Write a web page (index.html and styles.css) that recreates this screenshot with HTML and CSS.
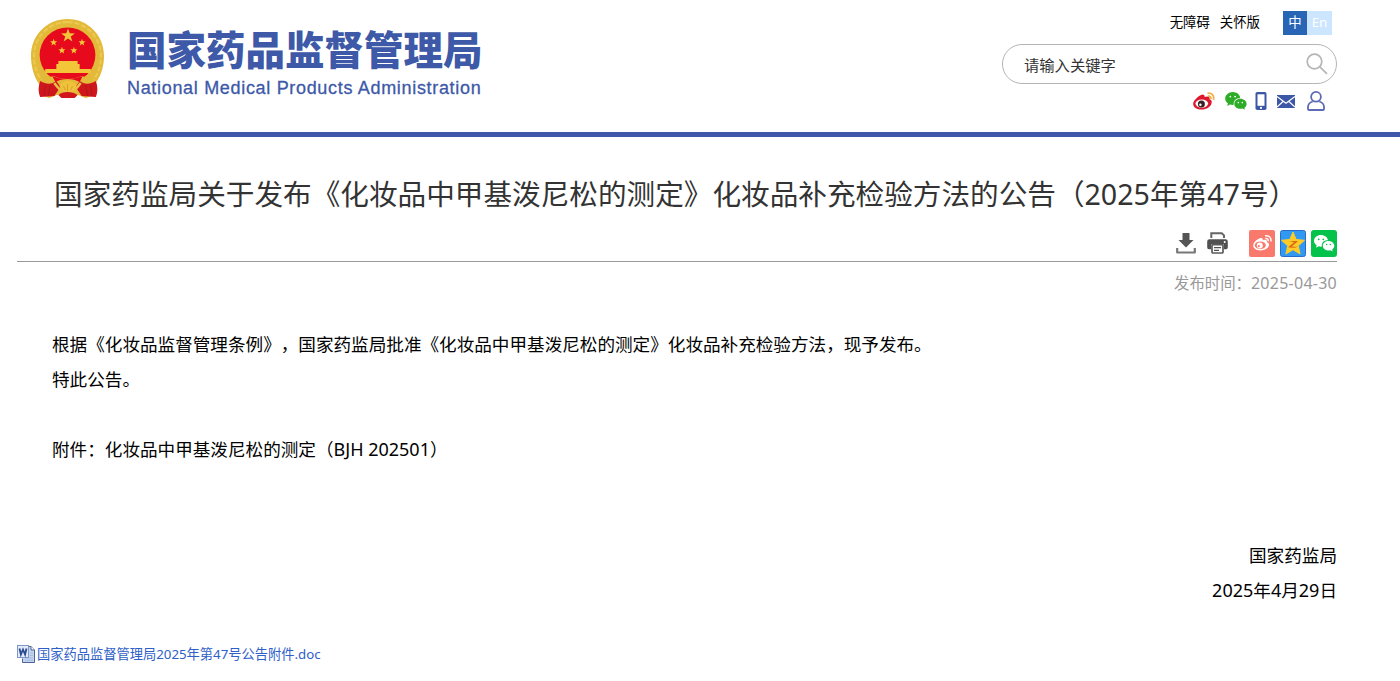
FILE: index.html
```html
<!DOCTYPE html>
<html lang="zh-CN">
<head>
    <meta charset="UTF-8">
    <meta name="viewport" content="width=device-width, initial-scale=1.0">
    <title>国家药品监督管理局</title>
    <link rel="stylesheet" href="styles.css">
</head>
<body>

    <!-- 页头 -->
    <header class="header">
        <a class="logo" href="#">
            <svg class="emblem" viewBox="0 0 74 80" width="75" height="80" preserveAspectRatio="none">
                <path d="M37 0C57 0 73 16 73 37c0 12-4 22-9 28L58 76H16L9 65C4 58 1 48 1 37 1 16 17 0 37 0z" fill="#e3b93a"/>
                <path d="M37 3C19 3 4 18 4 37c0 12 4 20 9 26M37 3c18 0 33 15 33 34 0 12-4 20-9 26" fill="none" stroke="#ecca52" stroke-width="2" stroke-dasharray="5 2"/>
                <circle cx="37" cy="36" r="27.500" fill="#e60a1c"/>
                <g fill="#f3c63a">
                    <path d="M37.500 9.500l1.700 4.800 5.100.1-4.100 3.200 1.600 5-4.300-3-4.300 3 1.600-5-4.100-3.200 5.100-.1z"/>
                    <path d="M23.300 19.700l.9 2.500 2.600.1-2 1.700.7 2.500-2.200-1.500-2.200 1.500.7-2.500-2-1.700 2.600-.1zM51.300 19.700l.9 2.500 2.600.1-2 1.700.7 2.500-2.200-1.500-2.200 1.500.7-2.500-2-1.700 2.600-.1zM31.500 27.700l.9 2.500 2.600.1-2 1.700.7 2.500-2.200-1.500-2.200 1.500.7-2.500-2-1.700 2.600-.1zM43.300 27.700l.9 2.500 2.600.1-2 1.700.7 2.500-2.200-1.500-2.200 1.500.7-2.500-2-1.700 2.600-.1z"/>
                    <path d="M28 42h19v3h2v5h11v4H15v-4h11v-5h2z"/>
                </g>
                <path d="M10 61l13-4c8 4 20 4 28 0l13 4v15l-9 3-10-4H29l-10 4-9-3z" fill="#e3b93a"/>
                <path d="M22 57c9 4 20 4 30 0l-3 6c-7-4-17-4-24 0z" fill="#e60a1c"/>
                <path d="M10 62c7 4 12 3 16 0l4 6-6 9-14 1c-2-5-2-10 0-16zM65 62c-7 4-12 3-16 0l-4 6 6 9 14 1c2-5 2-10 0-16z" fill="#cf161c"/>
                <path d="M24 64c5 7 8 9 13 9s8-2 13-9" fill="none" stroke="#eac044" stroke-width="2.500"/>
                <path d="M28 76c4-4 14-4 19 0l-3 3H31z" fill="#d3161c"/>
                <path d="M29 67c5-7 12-7 17 0l-4 5h-9z" fill="#f0c23a"/>
                <path d="M33 67l2 4m2-6v7m5-5l-2 4" stroke="#cf8d23" stroke-width=".7" fill="none"/>
                <path d="M15 66l-1 11M20 66l-2 11M60 66l1 11M55 66l2 11" stroke="#ad1919" stroke-width="1" fill="none"/>
            </svg>
            <span class="logo-text">
                <strong class="logo-cn">国家药品监督管理局</strong>
                <span class="logo-en">National Medical Products Administration</span>
            </span>
        </a>

        <div class="tools">
            <div class="links">
                <a href="#">无障碍</a>
                <a href="#">关怀版</a>
                <div class="lang">
                    <a class="lang-cn" href="#">中</a>
                    <a class="lang-en" href="#">En</a>
                </div>
            </div>
            <form class="search">
                <span class="search-text">请输入关键字</span>
                <svg width="22" height="22" viewBox="0 0 22 22" fill="none" stroke="#b5b5b5" stroke-width="1.700">
                    <circle cx="8.500" cy="8.500" r="7.300"/>
                    <path d="M13.800 13.800L21 20.800"/>
                </svg>
            </form>
            <div class="social">
                <svg width="22" height="18" viewBox="0 0 22 18">
                    <path d="M8 3c2-1.200 4-.4 3.600 2 3-1.200 5.600-.6 5 2.200 2 .7 2.400 2 2 3.800-.8 4-5 6.500-10 6.500C4 17.500.2 15.500.2 12 .2 9 4 5 8 3z" fill="#e0162b"/>
                    <ellipse cx="8.800" cy="11.600" rx="6.300" ry="4.200" fill="#fff"/>
                    <circle cx="8.400" cy="12" r="3.500" fill="#3a2226"/>
                    <circle cx="7.400" cy="12.800" r="1.200" fill="#fff"/>
                    <path d="M14.500 1.300c4-.8 7 2.200 6 6.500M15 4.200c2-.3 3.200 1 2.800 2.900" fill="none" stroke="#eeb04a" stroke-width="1.800"/>
                </svg>
                <svg class="wechat" width="22" height="18" viewBox="0 0 22 18" fill="#2dac27">
                    <path d="M7.700 0C12 0 15 2.800 15.200 6c-4 .1-7 2.700-6.500 6.800-1.200.2-2.600 0-3.700-.4L2.200 14l.7-2.700C1.100 10.200.2 8.500.2 6.600.2 3 3.600 0 7.700 0z"/>
                    <path d="M15.300 6.800c3.500 0 6.300 2.300 6.300 5.100 0 1.700-1 3-2.200 3.900l.4 1.900-2.200-1.200c-4.400 1.200-8.300-1.400-8.300-4.600 0-2.800 2.600-5.100 6-5.100z"/>
                    <circle cx="5.300" cy="4.600" r=".9" fill="#fff"/><circle cx="10.100" cy="4.600" r=".9" fill="#fff"/>
                    <circle cx="13.300" cy="10.600" r=".8" fill="#fff"/><circle cx="17.300" cy="10.600" r=".8" fill="#fff"/>
                </svg>
                <svg class="phone" width="12" height="18" viewBox="0 0 12 18">
                    <rect x=".5" width="11" height="18" rx="1.800" fill="#3d57a7"/>
                    <path d="M2.500 2.300h7v11.500h-7z" fill="#fff"/>
                    <circle cx="6" cy="15.900" r="1.100" fill="#fff"/>
                </svg>
                <svg class="mail" width="18" height="13" viewBox="0 0 18 13">
                    <path d="M0 0h18v13H0z" fill="#3d57a7"/>
                    <path d="M0 1.500l9 6.700 9-6.700M0 12l6.300-5.700M18 12l-6.300-5.700" fill="none" stroke="#fff" stroke-width="1.200"/>
                </svg>
                <svg class="user" width="18" height="20" viewBox="0 0 18 20" fill="none" stroke="#5c6cb4" stroke-width="1.800">
                    <circle cx="9" cy="5.800" r="4.900"/>
                    <path d="M5.700 10.500C2.500 11.500 1 13.500 1 16v2q0 1 1 1h14q1 0 1-1v-2c0-2.500-1.500-4.500-4.700-5.500"/>
                </svg>
            </div>
        </div>
    </header>

    <!-- 正文 -->
    <main class="article">
        <h1 class="title">国家药监局关于发布《化妆品中甲基泼尼松的测定》化妆品补充检验方法的公告（2025年第47号）</h1>

        <div class="share">
            <svg width="20" height="21" viewBox="0 0 20 21">
                <path d="M6.500 0h7v7h4L10 14.500 2.500 7h4z" fill="#555"/>
                <path d="M1.200 15v4.500h17.600V15" fill="none" stroke="#777" stroke-width="2.200" stroke-linejoin="round"/>
            </svg>
            <svg class="print" width="21" height="22" viewBox="0 0 21 22">
                <path d="M4.300 6V1.200h10.500L17 3.400V6" fill="none" stroke="#666" stroke-width="2"/>
                <path d="M2.500 7.300h16q2.300 0 2.300 2.300v6q0 1.700-1.700 1.700h-2.300v-5H4.200v5H1.900q-1.700 0-1.700-1.700v-6q0-2.300 2.300-2.300z" fill="#505050"/>
                <circle cx="17.700" cy="9.900" r="1" fill="#fff"/>
                <rect x="5" y="12.700" width="11" height="8.300" rx="1" fill="#fff" stroke="#5a5a5a" stroke-width="1.700"/>
                <path d="M7 15.700h7M7 18.300h5" stroke="#505050" stroke-width="1.300"/>
            </svg>
            <svg class="share-weibo" width="26" height="27" viewBox="0 0 26 27">
                <rect width="26" height="27" rx="2" fill="#f9796d"/>
                <path d="M10.500 8.500c2-.9 3.700-.3 3.200 1.700 2.900-1 4.800-.2 4.300 2.100 1.800.6 2.300 1.900 1.900 3.300-.7 3-4.100 4.800-8.400 4.800-4.300 0-7.300-1.900-7.300-4.900 0-2.600 3-5.700 6.300-7z" fill="#fff"/>
                <ellipse cx="11.300" cy="15.300" rx="5.500" ry="3.800" fill="#f9796d"/>
                <circle cx="10.800" cy="15.500" r="3" fill="#fff"/>
                <circle cx="9.800" cy="16.200" r="1.100" fill="#f9796d"/>
                <path d="M16 5.800c4-.8 6.700 1.900 5.800 5.700M16.300 8.500c2-.4 3.200.9 2.700 2.700" fill="none" stroke="#fff" stroke-width="1.500"/>
            </svg>
            <svg width="26" height="27" viewBox="0 0 26 27">
                <rect x=".5" y=".5" width="25" height="26" rx="2" fill="#309af2" stroke="#286ccb"/>
                <path d="M13 2l3.200 7.500 8.300.8-6.200 5.500 1.800 8.200-7.100-4.300L5.900 24l1.800-8.200-6.200-5.500 8.300-.8z" fill="#ffcb27" stroke="#ffcb27" stroke-linejoin="round"/>
                <path d="M8 11.500c3.500-.6 6.500-.8 10-.3l-6.300 5.200c2.800.5 4.500.5 6.800.1-3.200 1.500-6.800 1.600-10.500.8l6.200-5c-2-.7-4-.8-6.200-.8z" fill="#d96a14"/>
            </svg>
            <svg width="26" height="27" viewBox="0 0 26 27">
                <rect width="26" height="27" rx="3" fill="#04c24a"/>
                <path d="M10 5c3.800 0 6.600 2.300 7 5.200-4.200-.1-6.800 2.500-6.100 6.400-1.200.1-2.300-.1-3.200-.4L5 17.700l.7-2.400C4.100 14.200 3 12.700 3 11c0-3.400 3-6 7-6z" fill="#fff"/>
                <path d="M17.500 11c3.300 0 5.800 2.200 5.800 4.800 0 1.600-.9 2.800-2.100 3.700l.4 1.900-2.100-1.100c-4.200 1-7.700-1.400-7.700-4.500 0-2.700 2.600-4.800 5.700-4.800z" fill="#fff"/>
                <g fill="#04c24a"><circle cx="7.700" cy="9.300" r=".9"/><circle cx="12.300" cy="9.300" r=".9"/><circle cx="15.600" cy="14.500" r=".8"/><circle cx="19.400" cy="14.500" r=".8"/></g>
            </svg>
        </div>

        <p class="time">发布时间：<span>2025-04-30</span></p>

        <div class="text">
            <p>根据《化妆品监督管理条例》，国家药监局批准《化妆品中甲基泼尼松的测定》化妆品补充检验方法，现予发布。</p>
            <p>特此公告。</p>
            <p class="annex">附件：化妆品中甲基泼尼松的测定（<span>BJH 202501</span>）</p>
            <div class="sign">
                <p>国家药监局</p>
                <p><span>2025</span>年<span>4</span>月<span>29</span>日</p>
            </div>
        </div>

        <a class="file" href="#">
            <svg width="18" height="18" viewBox="0 0 18 18">
                <path d="M6.500 1.500h7.500l3.500 3.500v12.500h-12v-4" fill="#c3d4f0" stroke="#4d6393"/>
                <path d="M14 1.500V5h3.500" fill="#fff" stroke="#4d6393"/>
                <path d="M13 8h3M13 10.500h3M8 13h8M8 15.300h8" stroke="#a5bbe2"/>
                <rect x=".5" y=".5" width="11" height="12" fill="#e3ebf8" stroke="#7f97c6"/>
                <path d="M2.500 3.500l1.400 6 2.100-5 2.100 5 1.400-6" fill="none" stroke="#2b4a94" stroke-width="1.800"/>
            </svg>
            <span>国家药品监督管理局2025年第47号公告附件.doc</span>
        </a>
    </main>

</body>
</html>
```

FILE: styles.css
```css
* {
    box-sizing: border-box;
}

body {
    margin: 0;
    font-family: "Noto Sans", "Noto Sans CJK SC", sans-serif;
    color: #000;
    background: #fff;
    text-spacing-trim: space-all;
    overflow: hidden;
}

a {
    color: inherit;
    text-decoration: none;
}

p,
h1 {
    margin: 0;
}

svg {
    display: block;
    flex: none;
}

/* 页头 */

.header {
    display: flex;
    justify-content: space-between;
    height: 137px;
    padding: 0 63px 0 30px;
    border-bottom: 5px solid #3f57a9;
}

.logo {
    display: flex;
    gap: 22px;
    padding-top: 19px;
    color: #3d59a8;
}

.logo-text {
    display: flex;
    flex-direction: column;
    white-space: nowrap;
}

.logo-cn {
    height: 54px;
    font-size: 39.500px;
    font-weight: 900;
    line-height: 62px;
}

.logo-en {
    font-family: "Liberation Sans", sans-serif;
    font-size: 18px;
    line-height: 30px;
    letter-spacing: 0.680px;
    -webkit-text-stroke: 0.300px #3d59a8;
}

.tools {
    width: 335px;
}

.links {
    display: flex;
    justify-content: flex-end;
    gap: 10px;
    height: 44px;
    padding: 11px 5px 0 0;
    font-size: 13.400px;
    line-height: 22px;
}

.lang {
    display: flex;
    height: 24px;
    margin-left: 13px;
    color: #fff;
    line-height: 23px;
    text-align: center;
}

.lang-cn {
    width: 24px;
    background: #2866b5;
}

.lang-en {
    width: 25px;
    background: #cce6ff;
}

.search {
    display: flex;
    justify-content: space-between;
    align-items: center;
    height: 40px;
    padding: 0 8px 0 21px;
    border: 1px solid #b5b5b5;
    border-radius: 20px;
}

.search-text {
    font-size: 15.300px;
    line-height: 38px;
    color: #333;
    padding-top: 2px;
}

.social {
    display: flex;
    justify-content: flex-end;
    align-items: center;
    height: 34px;
    padding-right: 12px;
}

.wechat,
.mail {
    margin-left: 10px;
}

.phone {
    margin-left: 8px;
}

.user {
    margin-left: 12px;
}

/* 正文 */

.article {
    padding: 0 63px 0 17px;
}

.title {
    height: 92px;
    padding: 35px 0 0 37px;
    font-size: 28.630px;
    font-weight: 400;
    line-height: 44px;
    color: #333;
    white-space: nowrap;
}

.share {
    display: flex;
    justify-content: flex-end;
    align-items: center;
    gap: 5px;
    height: 33px;
    padding-bottom: 4px;
    border-bottom: 1px solid #999;
}

.print {
    margin-left: 6px;
}

.share-weibo {
    margin-left: 16px;
}

.time {
    height: 40px;
    font-size: 15.400px;
    line-height: 42px;
    color: #999;
    text-align: right;
}

.time span {
    font-size: 16px;
    letter-spacing: 0.250px;
}

.text {
    padding: 25px 0 0 35px;
    font-size: 17.600px;
    line-height: 35px;
}

.text span {
    font-size: 18px;
}

.annex {
    margin-top: 35px;
}

.sign {
    margin-top: 71px;
    text-align: right;
}

.file {
    display: flex;
    align-items: center;
    gap: 2px;
    margin-top: 36px;
    font-size: 13.250px;
    line-height: 20px;
    color: #2e60c8;
}
```
